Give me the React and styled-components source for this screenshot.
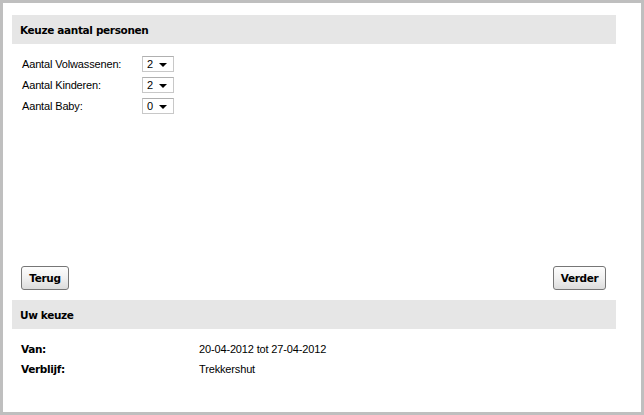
import React from "react";
import styled, { createGlobalStyle } from "styled-components";

const Global = createGlobalStyle`
  html, body { margin: 0; padding: 0; background: #fff; }
  * { box-sizing: border-box; }
`;

const Frame = styled.div`
  width: 644px;
  height: 415px;
  border: 3px solid #bfbfbf;
  background: #fff;
  padding: 12px 25px 0 9px;
  font-family: "DejaVu Sans", Verdana, sans-serif;
  font-size: 11px;
  color: #000;
  display: flex;
  flex-direction: column;
`;

const SectionHeader = styled.div`
  height: 29px;
  background: #e6e6e6;
  padding-left: 8px;
  display: flex;
  align-items: center;
  font-weight: bold;
  font-size: 10.5px;
  letter-spacing: -0.35px;
`;

const FormArea = styled.div`
  height: 214px;
  padding: 12px 0 0 10px;
  display: flex;
  flex-direction: column;
  gap: 5px;
`;

const FormRow = styled.div`
  display: grid;
  grid-template-columns: 120px 32px;
  align-items: center;
  height: 16px;
`;

const Label = styled.span`
  font-family: "Liberation Sans", Arial, sans-serif;
  font-size: 11px;
  letter-spacing: -0.15px;
`;

const SelectBox = styled.div`
  width: 32px;
  height: 16px;
  border: 1px solid #c8c8c8;
  border-top-color: #b0b0b0;
  background: #fff;
  display: flex;
  align-items: center;
  justify-content: space-between;
  padding: 0 6px 0 4px;
  font-family: "Liberation Sans", Arial, sans-serif;
  font-size: 11px;
`;

const Arrow = styled.span`
  width: 0;
  height: 0;
  border-left: 4px solid transparent;
  border-right: 4px solid transparent;
  border-top: 4px solid #000;
  margin-top: 1px;
`;

const ButtonBar = styled.div`
  display: flex;
  justify-content: space-between;
  padding: 8px 10px 10px 9px;
`;

const Button = styled.button`
  height: 24px;
  width: ${(p) => p.$w}px;
  padding: 0;
  border: 1px solid #767676;
  border-radius: 3px;
  background: linear-gradient(#fdfdfd 0%, #f0f0f0 50%, #dcdcdc 100%);
  font-family: "DejaVu Sans", Verdana, sans-serif;
  font-weight: bold;
  font-size: 10.5px;
  letter-spacing: -0.35px;
  color: #000;
`;

const Summary = styled.div`
  padding: 13px 0 0 9px;
  display: flex;
  flex-direction: column;
  gap: 7px;
`;

const SummaryRow = styled.div`
  display: grid;
  grid-template-columns: 178px 1fr;
  height: 13px;
  align-items: center;
`;

const SummaryLabel = styled.span`
  font-weight: bold;
  font-size: 10.5px;
  letter-spacing: -0.35px;
`;

const SummaryValue = styled.span`
  font-family: "Liberation Sans", Arial, sans-serif;
  font-size: 11px;
  letter-spacing: -0.15px;
`;

const persons = [
  ["Aantal Volwassenen:", "2"],
  ["Aantal Kinderen:", "2"],
  ["Aantal Baby:", "0"],
];

export default function App() {
  return (
    <>
      <Global />
      <Frame>
        <SectionHeader>Keuze aantal personen</SectionHeader>
        <FormArea>
          {persons.map(([l, v]) => (
            <FormRow key={l}>
              <Label>{l}</Label>
              <SelectBox>
                <span>{v}</span>
                <Arrow />
              </SelectBox>
            </FormRow>
          ))}
        </FormArea>
        <ButtonBar>
          <Button $w={48}>Terug</Button>
          <Button $w={53}>Verder</Button>
        </ButtonBar>
        <SectionHeader>Uw keuze</SectionHeader>
        <Summary>
          <SummaryRow>
            <SummaryLabel>Van:</SummaryLabel>
            <SummaryValue>20-04-2012 tot 27-04-2012</SummaryValue>
          </SummaryRow>
          <SummaryRow>
            <SummaryLabel>Verblijf:</SummaryLabel>
            <SummaryValue>Trekkershut</SummaryValue>
          </SummaryRow>
        </Summary>
      </Frame>
    </>
  );
}
